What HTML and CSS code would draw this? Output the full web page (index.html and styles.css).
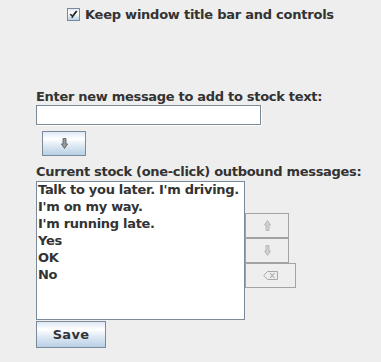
FILE: index.html
```html
<!DOCTYPE html>
<html lang="en">
<head>
  <meta charset="UTF-8" />
  <title>Stock Messages</title>
  <link rel="stylesheet" href="styles.css">
</head>
<body>
  <div class="window">
    <label class="keep-row">
      <span class="checkbox">
        <svg width="9" height="9" viewBox="0 0 9 9"><path d="M1 4.5 L3 6.5 L3 8 L8 1.5 L7 1 L3 6 L2 4 Z" fill="#222" stroke="#222" stroke-width="0.8"/></svg>
      </span>
      <span>Keep window title bar and controls</span>
    </label>

    <div class="caption compose-caption">Enter new message to add to stock text:</div>
    <input class="message-field" type="text">
    <button class="btn add-btn">
      <svg width="7" height="11" viewBox="0 0 7 11"><path d="M2 0.5 L5 0.5 L5 6 L6.5 6 L3.5 10.5 L0.5 6 L2 6 Z" fill="#9a9a9a" stroke="#555" stroke-width="0.8"/></svg>
    </button>

    <div class="caption stock-caption">Current stock (one-click) outbound messages:</div>
    <div class="stock-row">
      <ul class="stock-list">
        <li>Talk to you later. I'm driving.</li>
        <li>I'm on my way.</li>
        <li>I'm running late.</li>
        <li>Yes</li>
        <li>OK</li>
        <li>No</li>
      </ul>
      <div class="list-actions">
        <button class="btn btn-off move-btn" disabled>
          <svg width="7" height="11" viewBox="0 0 7 11"><path d="M2 10.5 L5 10.5 L5 5 L6.5 5 L3.5 0.5 L0.5 5 L2 5 Z" fill="#d0d0d0" stroke="#b0b0b0" stroke-width="0.8"/></svg>
        </button>
        <button class="btn btn-off move-btn" disabled>
          <svg width="7" height="11" viewBox="0 0 7 11"><path d="M2 0.5 L5 0.5 L5 6 L6.5 6 L3.5 10.5 L0.5 6 L2 6 Z" fill="#d0d0d0" stroke="#b0b0b0" stroke-width="0.8"/></svg>
        </button>
        <button class="btn btn-off delete-btn" disabled>
          <svg width="15" height="9" viewBox="0 0 15 9"><path d="M0.8 4.5 L4.5 0.5 L14.5 0.5 L14.5 8.5 L4.5 8.5 Z" fill="none" stroke="#a8a8a8" stroke-width="1"/><path d="M7 2 L11.5 7 M11.5 2 L7 7" stroke="#a8a8a8" stroke-width="1.1"/></svg>
        </button>
      </div>
    </div>
    <button class="btn save-btn">Save</button>
  </div>
</body>
</html>
```

FILE: styles.css
```css
body {
  margin: 0;
  background-color: #eeeeee;
  font-family: "DejaVu Sans", sans-serif;
  font-weight: bold;
  font-size: 13px;
  color: #333333;
}
.window {
  display: flex;
  flex-direction: column;
  align-items: flex-start;
  padding-left: 36px;
}
.keep-row {
  display: flex;
  align-items: center;
  gap: 5px;
  margin-top: 7px;
  margin-left: 31px;
  line-height: 15px;
  letter-spacing: -0.24px;
}
.checkbox {
  width: 11px;
  height: 11px;
  border: 1px solid #7a8a99;
  background: linear-gradient(#dde8f3, #ffffff 40%, #b8cfe5);
  display: flex;
  align-items: center;
  justify-content: center;
}
.caption {
  line-height: 15px;
  letter-spacing: -0.3px;
}
.compose-caption {
  margin-top: 67px;
}
.message-field {
  box-sizing: border-box;
  width: 225px;
  height: 20px;
  margin: 1px 0 0 0;
  padding: 0 2px;
  border: 1px solid #7a8a99;
  box-shadow: 1px 1px 0 #ffffff;
  background: #ffffff;
  font: inherit;
  outline: none;
}
.btn {
  box-sizing: border-box;
  display: flex;
  align-items: center;
  justify-content: center;
  padding: 0;
  border: 1px solid #7a8a99;
  background: linear-gradient(#dde8f3, #ffffff 30%, #dde8f3 60%, #b8cfe5);
  font: inherit;
  color: #333333;
}
.add-btn {
  width: 44px;
  height: 25px;
  margin: 6px 0 0 6px;
}
.stock-caption {
  margin-top: 8px;
}
.stock-row {
  display: flex;
  align-items: center;
  margin-top: 2px;
}
.stock-list {
  box-sizing: border-box;
  width: 209px;
  height: 139px;
  margin: 0;
  padding: 0 0 0 1px;
  list-style: none;
  background: #ffffff;
  border: 1px solid #7a8a99;
}
.stock-list li {
  line-height: 17px;
  white-space: nowrap;
  letter-spacing: -0.3px;
}
.stock-list li:first-child {
  margin-top: -1px;
}
.list-actions {
  display: flex;
  flex-direction: column;
  align-items: flex-start;
}
.btn-off {
  background: #eeeeee;
  border-color: #a3a3a3;
}
.move-btn {
  width: 44px;
  height: 25px;
}
.delete-btn {
  width: 51px;
  height: 25px;
}
.save-btn {
  width: 70px;
  height: 27px;
  margin-top: 1px;
  letter-spacing: 0.3px;
}
```
